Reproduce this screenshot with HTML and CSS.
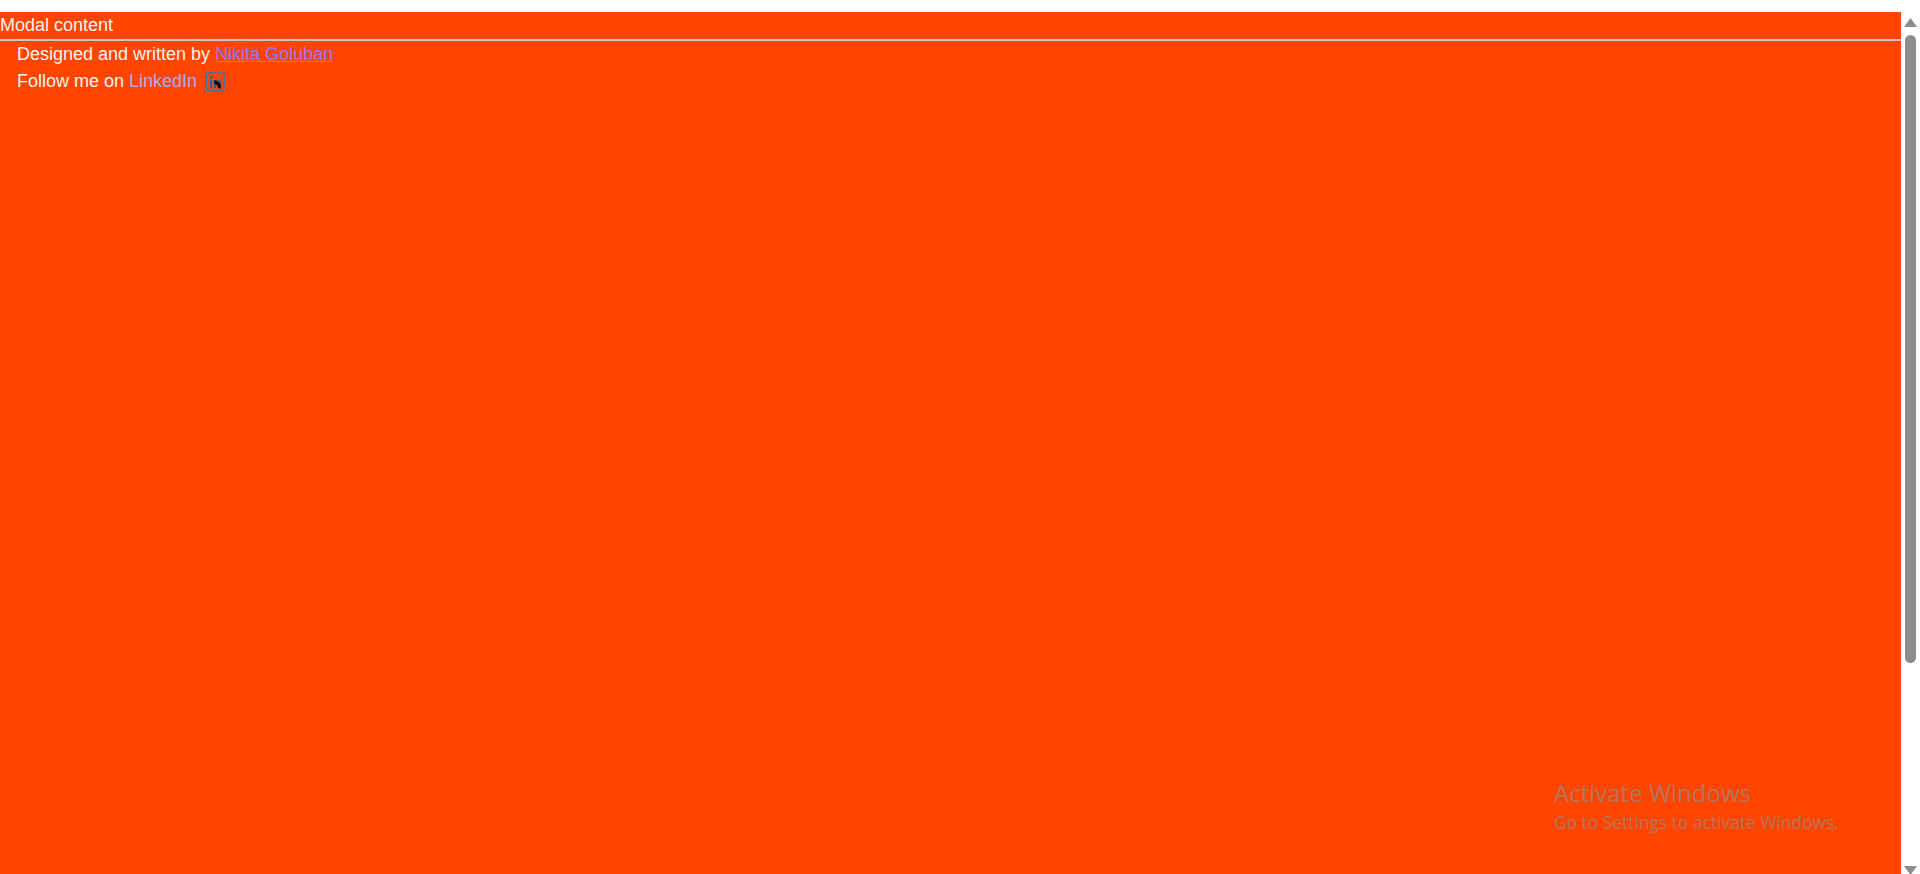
FILE: index.html
```html
<!DOCTYPE html>
<html lang="en">

<head>
    <meta charset="utf-8">
    <title>Modal</title>
    <link rel="stylesheet" href="styles.css">
</head>

<body>
    <main class="side">
        <section class="modal">
            <header class="modal-header">Modal content</header>
            <div class="modal-body">
                <p>Designed and written by <a class="visited" href="#">Nikita Goluban</a></p>
                <p>Follow me on <span class="link">LinkedIn</span>
                    <svg class="linkedin" viewBox="0 0 20 20" width="20" height="20" aria-hidden="true">
                        <rect x="1" y="1" width="18" height="18" rx="2" fill="none" stroke="#2a7cb0" stroke-width="1.6" />
                        <rect x="5" y="8" width="2.200" height="8.500" fill="#1c6a9c" />
                        <rect x="5" y="4" width="2.200" height="2.400" fill="#1c6a9c" />
                        <path d="M9 16.500V8h2v1c1-1.400 5-1.500 5 1.500v6h-2v-5c0-1.200-3-1.200-3 0v5z" fill="#1c6a9c" />
                        <path d="M9 8.500c2-.5 5 1 7 4.500l-.5 3.500-2-.5-1.500-3-2.500-1z" fill="#000" />
                    </svg>
                </p>
            </div>
        </section>
    </main>

    <aside class="scrollbar">
        <svg class="arrow" viewBox="0 0 13 9" width="13" height="9"><path d="M6.500 0l6.500 9H0z" /></svg>
        <div class="thumb"></div>
        <svg class="arrow" viewBox="0 0 13 9" width="13" height="9"><path d="M0 0h13L6.500 9z" /></svg>
    </aside>

    <div class="watermark">
        <div class="wm-title">Activate Windows</div>
        <div class="wm-sub">Go to Settings to activate Windows.</div>
    </div>
</body>

</html>
```

FILE: styles.css
```css
html,
body {
    height: 100%;
}

body {
    margin: 0;
    display: flex;
    overflow: hidden;
    background: #fff;
    font-family: "Liberation Sans", Arial, sans-serif;
    font-size: 18px;
    color: #f4f4f4;
}

.side {
    flex: 1;
    display: flex;
    padding-top: 12px;
}

.modal {
    flex: 1;
    background: #ff4500;
}

.modal-header {
    height: 29px;
    line-height: 26px;
    box-sizing: border-box;
    border-bottom: 2px solid #c8c8c8;
}

.modal-body {
    padding: 1px 17px;
}

.modal-body p {
    margin: 0;
    height: 27px;
    line-height: 25px;
}

.visited {
    color: #8878ff;
}

.link {
    color: #a8a8ff;
}

.linkedin {
    margin-left: 3px;
    vertical-align: -5px;
}

.scrollbar {
    width: 19px;
    display: flex;
    flex-direction: column;
    align-items: center;
    padding-top: 18px;
    margin-bottom: -1px;
}

.arrow {
    fill: #8c8c8c;
    flex: none;
}

.thumb {
    width: 11px;
    flex: 1;
    margin: 8px 0 203px;
    border-radius: 6px;
    background: #8c8c8c;
}

.watermark {
    position: absolute;
    left: 1554px;
    top: 776px;
    font-family: "Open Sans", sans-serif;
    color: rgba(140, 140, 140, .7);
}

.wm-title {
    font-size: 24px;
    line-height: 33px;
}

.wm-sub {
    font-size: 17.400px;
    line-height: 27px;
}
```
